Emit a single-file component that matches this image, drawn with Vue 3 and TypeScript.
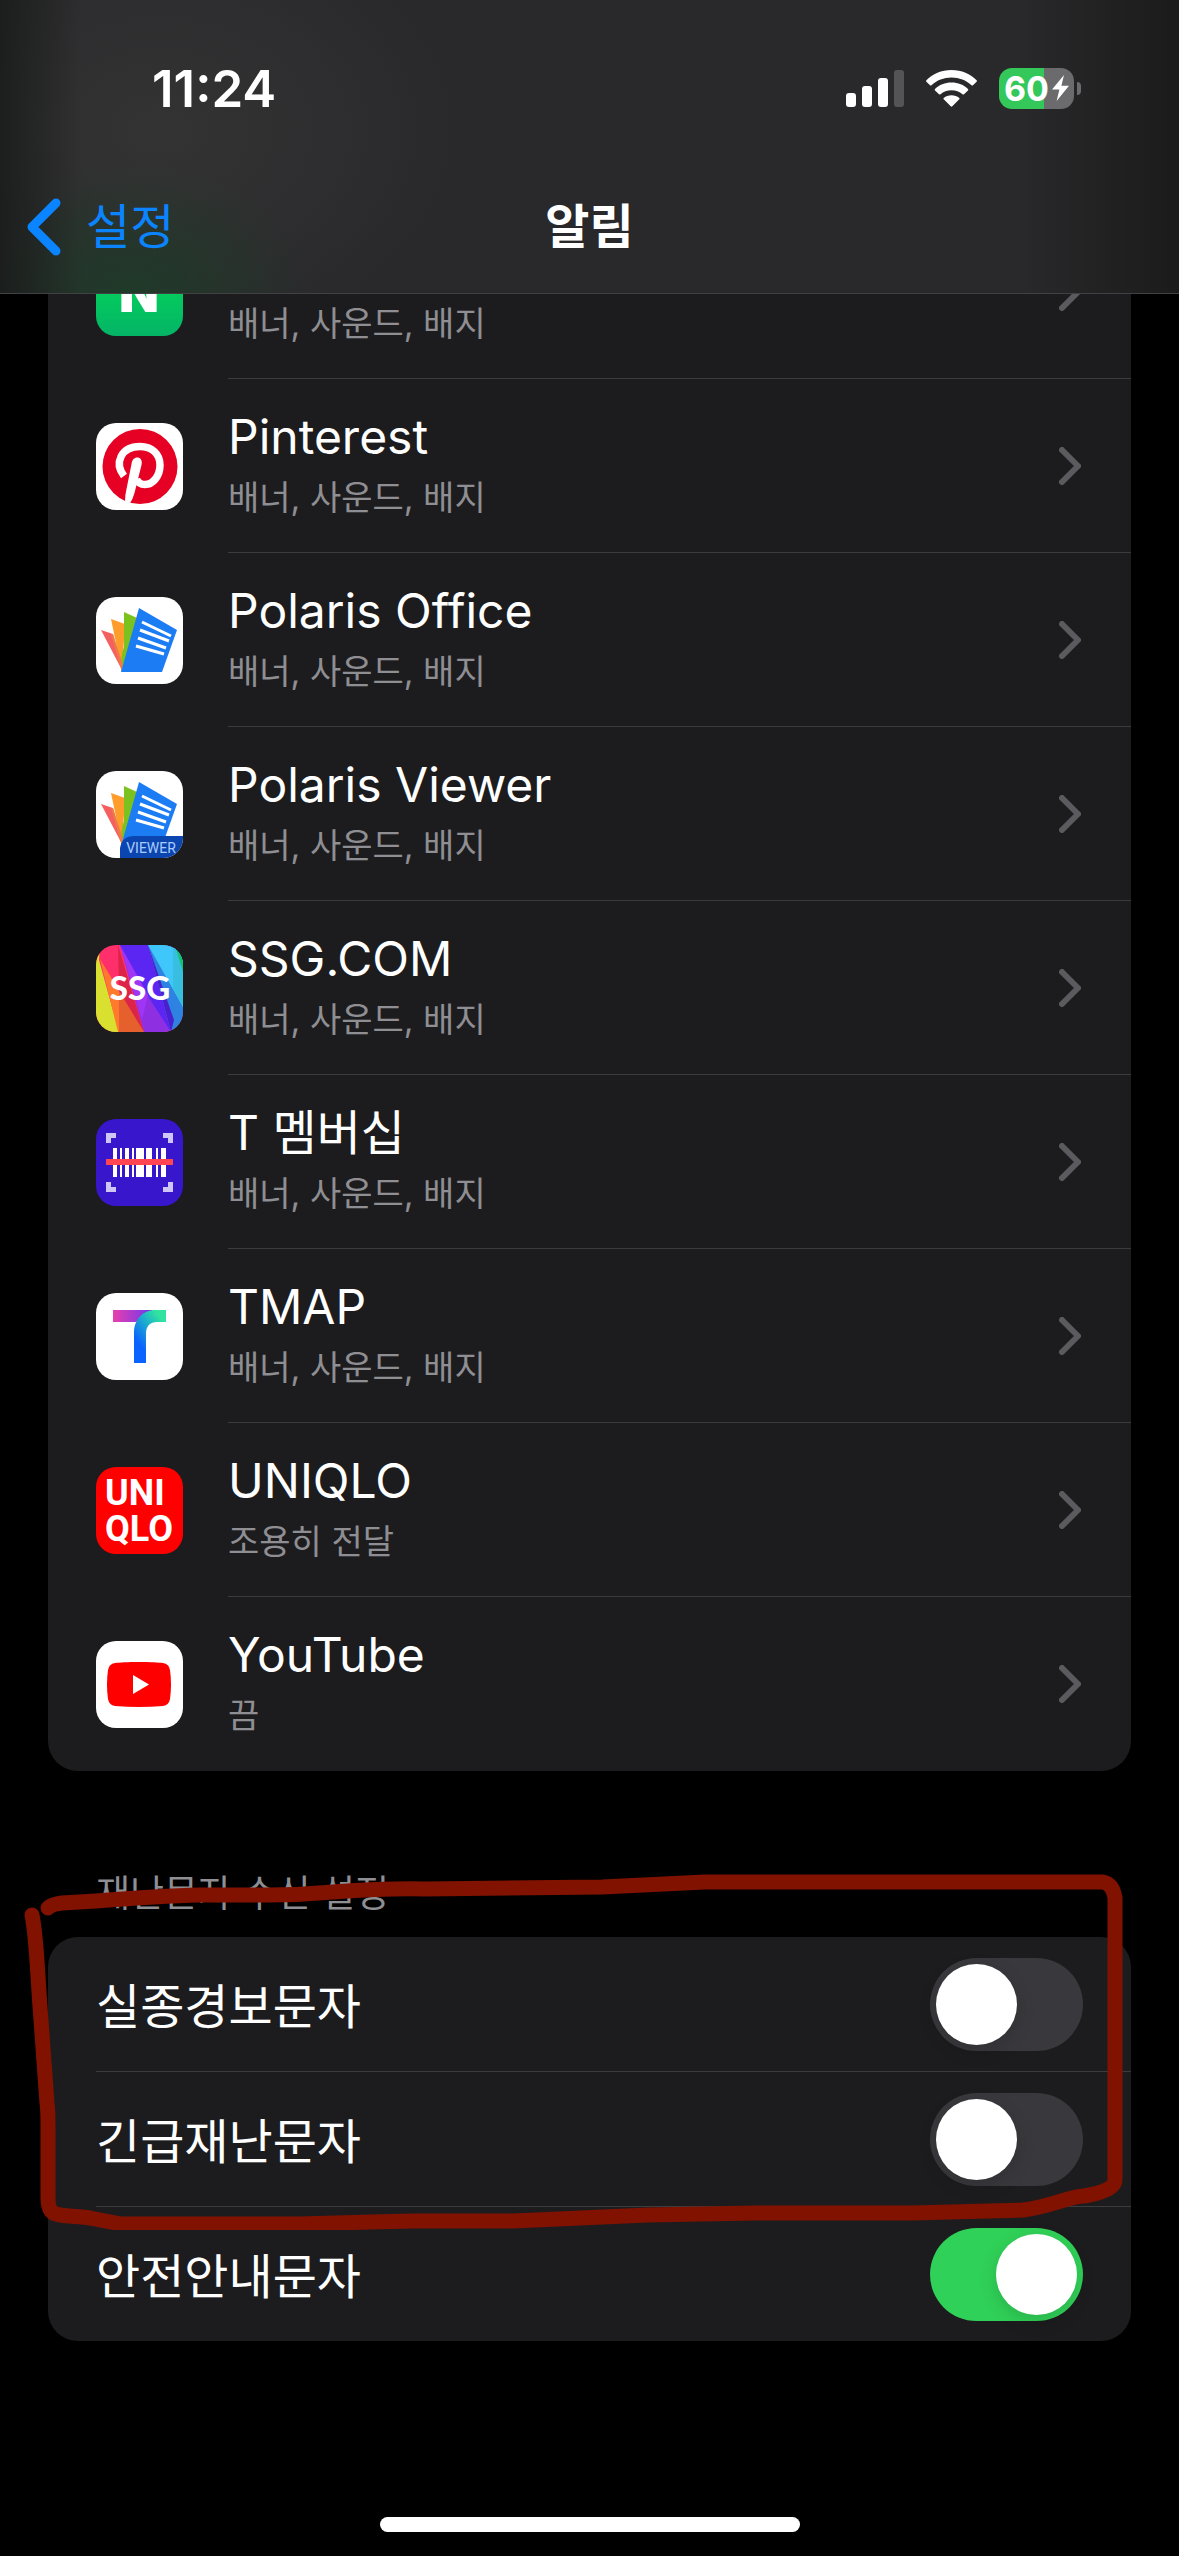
<script setup lang="ts">
import { ref } from 'vue'

interface AppEntry {
  id: string
  name: string
  detail: string
}

interface AlertSetting {
  id: string
  label: string
  on: boolean
}

const allAlerts = '배너, 사운드, 배지'

const apps: AppEntry[] = [
  { id: 'naver', name: '', detail: allAlerts },
  { id: 'pinterest', name: 'Pinterest', detail: allAlerts },
  { id: 'polaris-office', name: 'Polaris Office', detail: allAlerts },
  { id: 'polaris-viewer', name: 'Polaris Viewer', detail: allAlerts },
  { id: 'ssg', name: 'SSG.COM', detail: allAlerts },
  { id: 'tmembership', name: 'T 멤버십', detail: allAlerts },
  { id: 'tmap', name: 'TMAP', detail: allAlerts },
  { id: 'uniqlo', name: 'UNIQLO', detail: '조용히 전달' },
  { id: 'youtube', name: 'YouTube', detail: '끔' },
]

const alerts = ref<AlertSetting[]>([
  { id: 'missing', label: '실종경보문자', on: false },
  { id: 'emergency', label: '긴급재난문자', on: false },
  { id: 'safety', label: '안전안내문자', on: true },
])
</script>

<template>
  <div class="screen">
    <header class="top">
      <div class="status">
        <span class="time">11:24</span>
        <div class="indicators">
          <svg class="signal" viewBox="0 0 58 37" aria-hidden="true">
            <rect x="0" y="23" width="10" height="14" rx="3" fill="#fff" />
            <rect x="16" y="16" width="10" height="21" rx="3" fill="#fff" />
            <rect x="32" y="8" width="10" height="29" rx="3" fill="#fff" />
            <rect x="48" y="0" width="10" height="37" rx="3" fill="#545456" />
          </svg>
          <svg class="wifi" viewBox="0 0 51 37" aria-hidden="true">
            <g fill="#fff">
              <path d="M25.500 0C35.500 0 44.500 3.900 50.600 10.200Q51.300 11 50.600 11.700L47 15.200Q46.300 15.800 45.500 15.200C40.200 10.300 33.200 7.500 25.500 7.500S10.800 10.300 5.500 15.200Q4.700 15.800 4 15.200L.4 11.700Q-.3 11 .4 10.200C6.500 3.900 15.500 0 25.500 0Z" />
              <path d="M25.500 12.500C32 12.500 37.800 14.900 42 18.900Q42.700 19.700 42 20.400L38 24.300Q37.300 24.900 36.500 24.300C33.600 21.700 29.700 20.200 25.500 20.200S17.400 21.700 14.500 24.300Q13.700 24.900 13 24.300L9 20.400Q8.300 19.700 9 18.900C13.200 14.900 19 12.500 25.500 12.500Z" />
              <path d="M25.500 25.200C28.500 25.200 31.200 26.200 33.300 27.900Q34 28.600 33.300 29.300L26.300 36.300Q25.500 37 24.700 36.300L17.700 29.300Q17 28.600 17.700 27.900C19.800 26.200 22.500 25.200 25.500 25.200Z" />
            </g>
          </svg>
          <div class="battery">
            <div class="cell">
              <span>60</span>
              <svg viewBox="0 0 17 26" aria-hidden="true">
                <path d="M12 0L0 14.500H7.400L4.600 26L17 10.800H9.400Z" fill="#fff" />
              </svg>
            </div>
            <i class="cap"></i>
          </div>
        </div>
      </div>
      <nav class="nav">
        <button class="back" type="button">
          <svg viewBox="0 0 34 58" aria-hidden="true">
            <path d="M29 5L5 29L29 53" fill="none" stroke="#0a84ff" stroke-width="9" stroke-linecap="round" stroke-linejoin="round" />
          </svg>
          <span>설정</span>
        </button>
        <h1>알림</h1>
      </nav>
    </header>

    <main>
      <ul class="card apps">
        <li v-for="app in apps" :key="app.id">
          <a href="#" class="app">
            <svg class="icon" viewBox="0 0 87 87" aria-hidden="true">
              <template v-if="app.id === 'naver'">
                <defs>
                  <linearGradient id="naver-bg" x1="0" y1="0" x2="0" y2="1">
                    <stop offset="0.4" stop-color="#04d05c" />
                    <stop offset="1" stop-color="#04b466" />
                  </linearGradient>
                </defs>
                <rect width="87" height="87" fill="url(#naver-bg)" />
                <text x="43" y="63" text-anchor="middle" font-family="Inter, sans-serif" font-weight="900" font-size="52" fill="#fff">N</text>
              </template>

              <template v-else-if="app.id === 'pinterest'">
                <rect width="87" height="87" fill="#fff" />
                <circle cx="44" cy="43.500" r="37.500" fill="#e60023" />
                <path d="M28 53C18 40 25 23.500 44 23.500C56 23.500 64 31 64 42C64 53 57 61.500 49 61.500C45 61.500 42 60 40.500 56" fill="none" stroke="#fff" stroke-width="7.500" />
                <path d="M35.500 41C36 36 39 34 42 34.500C45 35 46.500 38 45.500 42L38.500 70Q37 76 33 82L29 78Q29 72 30.500 66Z" fill="#fff" />
              </template>

              <template v-else-if="app.id === 'polaris-office' || app.id === 'polaris-viewer'">
                <rect width="87" height="87" fill="#fff" />
                <path d="M5 33L17 37L27 75Z" fill="#f4605f" />
                <path d="M15 22L29 27L26 75Z" fill="#ff9d2c" />
                <path d="M28 15L41 21L26 75Q24 60 28 50Z" fill="#7cc21f" />
                <path d="M15 37L17 37L27 68L26 75Z" fill="#ef7a45" />
                <path d="M43 11L81 33L66 75H25Z" fill="#1c7cf4" />
                <path d="M46 25L75 39M44 33L73 44M42 41L70 51M40 49L68 57" stroke="#fff" stroke-width="3" />
                <template v-if="app.id === 'polaris-viewer'">
                  <path d="M24 87V77Q26 65 38 65H87V87Z" fill="#0b46b0" />
                  <text x="55" y="82" text-anchor="middle" font-family="Roboto, sans-serif" font-size="14" fill="#a9cdff">VIEWER</text>
                </template>
              </template>

              <template v-else-if="app.id === 'ssg'">
                <rect width="87" height="87" fill="#ff2f6c" />
                <path d="M0 0H4L3 15L23 87H0Z" fill="#d9e02f" />
                <path d="M4 14L22 87H48Z" fill="#ff7a2c" />
                <path d="M23 46L48 87H23Z" fill="#e5602c" />
                <path d="M22 0L48 87L23 46Z" fill="#dc2448" />
                <path d="M24 0H52L75 87H48Z" fill="#8f2fe2" />
                <path d="M24 0H52L75 87L50 48Z" fill="#5b26f2" />
                <path d="M24 0L52 50L46 75Z" fill="#a035f5" />
                <path d="M52 0H87V87H75Z" fill="#2d82e2" />
                <path d="M52 0H87V62Z" fill="#3fc6fb" />
                <path d="M77 0H87V62L77 44Z" fill="#38bfe0" />
                <path d="M52 0L75 87L78 75Z" fill="#4a1fd0" />
                <path d="M79 0H87V27Z" fill="#0cc46a" />
                <text x="44" y="55" text-anchor="middle" font-family="Lato, sans-serif" font-weight="900" font-size="33" fill="#fff">SSG</text>
              </template>

              <template v-else-if="app.id === 'tmembership'">
                <rect width="87" height="87" fill="#3716cc" />
                <path d="M10 24V14H20V19H15V24ZM67 14H77V24H72V19H67ZM10 63H15V68H20V73H10ZM72 63H77V73H67V68H72Z" fill="#cdc6f6" />
                <path d="M17 29h4v29h-4zM24 29h2v29h-2zM29 29h4v29h-4zM36 29h2v29h-2zM40 29h8v29h-8zM50 29h6v29h-6zM60 29h2v29h-2zM65 29h5v29h-5z" fill="#fff" />
                <rect x="10" y="40" width="67" height="6" fill="#ff4552" />
              </template>

              <template v-else-if="app.id === 'tmap'">
                <defs>
                  <linearGradient id="tmap-bar" x1="0" y1="0" x2="1" y2="0">
                    <stop offset="0" stop-color="#e83fae" />
                    <stop offset="1" stop-color="#6a38f0" />
                  </linearGradient>
                  <linearGradient id="tmap-stem" x1="0.800" y1="0" x2="0.200" y2="0.800">
                    <stop offset="0.100" stop-color="#30e3a0" />
                    <stop offset="0.400" stop-color="#1fb4c8" />
                    <stop offset="0.900" stop-color="#0a62ff" />
                  </linearGradient>
                </defs>
                <rect width="87" height="87" fill="#fff" />
                <path d="M17 17H57L40 29H17Z" fill="url(#tmap-bar)" />
                <path d="M70 17H60C46 17 38 27 38 40V70H50V41C50 33 54 29 61 29H70Z" fill="url(#tmap-stem)" />
              </template>

              <template v-else-if="app.id === 'uniqlo'">
                <rect width="87" height="87" fill="#f00" />
                <g font-family="Roboto, sans-serif" font-weight="700" font-size="36" fill="#fff">
                  <text x="9" y="38">UNI</text>
                  <text x="9" y="74">QLO</text>
                </g>
              </template>

              <template v-else>
                <rect width="87" height="87" fill="#fff" />
                <path d="M43 21C54 21 63 21.500 67 22Q73 23 74 29Q76 43.500 74 58Q73 64 67 65Q43 67 19 65Q13 64 12 58Q10 43.500 12 29Q13 23 19 22C23 21.500 32 21 43 21Z" fill="#f00" />
                <path d="M37 34L53 43.500L37 53Z" fill="#fff" />
              </template>
            </svg>
            <span class="body">
              <span class="text">
                <span class="name">{{ app.name }}</span>
                <span class="detail">{{ app.detail }}</span>
              </span>
              <svg class="chevron" viewBox="0 0 22 38" aria-hidden="true">
                <path d="M3 3L19 19L3 35" fill="none" stroke="#5a5a5f" stroke-width="6" stroke-linecap="round" stroke-linejoin="round" />
              </svg>
            </span>
          </a>
        </li>
      </ul>

      <section class="disaster">
        <h2>재난문자 수신 설정</h2>
        <ul class="card">
          <li v-for="alert in alerts" :key="alert.id" class="alert">
            <label :for="alert.id">{{ alert.label }}</label>
            <input :id="alert.id" v-model="alert.on" type="checkbox" role="switch" class="switch" />
          </li>
        </ul>
        <!-- Hand-drawn marker around the first two switches -->
        <svg class="marker" viewBox="0 0 1179 380" preserveAspectRatio="none" aria-hidden="true">
          <g fill="none" stroke="#811200" stroke-width="15" stroke-linecap="round" stroke-linejoin="round">
            <path d="M32 65C37 90 37 120 41 170L47 253Q48 260 48 275V348Q48 362 56 364C66 367 78 366 90 368L121 374H299L371 372L413 371H513L648 365L755 363H912L1023 360C1050 357 1070 346 1084 346Q1115 341 1115 330V48Q1113 34 1103 32H705L602 37L425 39Q390 38 333 42Q300 45 268 45H200Q160 46 96 51L62 53Q52 54 48 58" />
          </g>
        </svg>
      </section>
    </main>

    <footer class="home"><i></i></footer>
  </div>
</template>

<style>
body {
  background: #000;
}
</style>

<style scoped>
.screen {
  display: flex;
  flex-direction: column;
  min-height: 100vh;
  background: #000;
  color: #fff;
  font-family: Inter, 'Noto Sans CJK KR', sans-serif;
  font-size: 48px;
}

h1,
h2,
ul {
  margin: 0;
  padding: 0;
  list-style: none;
}

svg {
  display: block;
  flex: none;
}

.top {
  position: sticky;
  top: 0;
  z-index: 2;
  padding-top: 16px;
  border-bottom: 1px solid #414143;
  background:
    linear-gradient(90deg, rgba(24, 26, 25, 0.8), transparent 80px),
    radial-gradient(ellipse 180px 130px at 130px 293px, rgba(28, 62, 40, 0.8), transparent),
    radial-gradient(ellipse 300px 220px at 160px 130px, rgba(60, 58, 58, 0.6), transparent),
    linear-gradient(90deg, #29292b calc(100% - 160px), #1b1b1b);
}

.status {
  display: flex;
  align-items: center;
  justify-content: space-between;
  height: 144px;
  padding: 0 98px 0 152px;
}

.time {
  font-size: 51px;
  font-weight: 600;
}

.indicators {
  display: flex;
  align-items: center;
  gap: 22px;
}

.signal {
  width: 58px;
  height: 37px;
}

.wifi {
  width: 51px;
  height: 37px;
}

.battery {
  display: flex;
  align-items: center;
  gap: 3px;
}

.cell {
  display: flex;
  align-items: center;
  justify-content: center;
  gap: 3px;
  width: 75px;
  height: 41px;
  border-radius: 13px;
  background: linear-gradient(90deg, #34c759 60%, #6b6b6d 60%);
  font-size: 34px;
  font-weight: 700;
  line-height: 41px;
}

.cell svg {
  width: 17px;
  height: 26px;
}

.cap {
  width: 4px;
  height: 13px;
  border-radius: 0 6px 6px 0;
  background: #6b6b6d;
}

.nav {
  display: grid;
  grid-template-columns: 1fr auto 1fr;
  align-items: center;
  height: 133px;
  padding: 0 27px;
}

.back {
  display: flex;
  align-items: center;
  justify-self: start;
  gap: 25px;
  padding: 0;
  border: 0;
  background: none;
  color: #0a84ff;
  font: inherit;
  line-height: 60px;
}

.back svg {
  width: 34px;
  height: 58px;
}

h1 {
  font-size: 48px;
  font-weight: 600;
  line-height: 60px;
}

.card {
  margin: 0 48px;
  overflow: hidden;
  border-radius: 30px;
  background: #1c1c1e;
}

/* The list is scrolled so that its first row sits partly under the header */
.apps {
  margin-top: -89px;
}

.app {
  display: flex;
  gap: 45px;
  align-items: center;
  padding-left: 48px;
  color: inherit;
  text-decoration: none;
}

.icon {
  width: 87px;
  height: 87px;
  border-radius: 20px;
}

.body {
  display: flex;
  flex: 1;
  align-items: center;
  justify-content: space-between;
  height: 173px;
  padding-right: 50px;
  border-bottom: 1px solid #3c3c3f;
}

li:last-child .body {
  border-bottom-color: transparent;
}

.text {
  display: flex;
  flex-direction: column;
  gap: 6px;
}

.name {
  min-height: 60px;
  line-height: 60px;
}

.detail {
  padding-bottom: 2px;
  color: #8e8e93;
  font-size: 34px;
  line-height: 50px;
}

.chevron {
  width: 22px;
  height: 38px;
}

.disaster {
  position: relative;
  padding-top: 98px;
}

h2 {
  padding: 0 96px 18px;
  color: #8e8e93;
  font-size: 37px;
  font-weight: 400;
  line-height: 50px;
}

.alert {
  display: flex;
  align-items: center;
  justify-content: space-between;
  height: 134px;
  margin-left: 48px;
  padding-right: 48px;
  border-bottom: 1px solid #3c3c3f;
}

.alert label {
  padding-bottom: 2px;
}

.alert:last-child {
  border-bottom: 0;
}

.switch {
  appearance: none;
  display: flex;
  width: 153px;
  height: 93px;
  margin: 0;
  padding: 6px;
  box-sizing: border-box;
  border-radius: 47px;
  background: #39393d;
}

.switch::before {
  content: '';
  width: 81px;
  height: 81px;
  border-radius: 50%;
  background: #fff;
  box-shadow: 0 6px 18px rgba(0, 0, 0, 0.15);
}

.switch:checked {
  justify-content: flex-end;
  background: #30d158;
}

.marker {
  position: absolute;
  top: 79px;
  left: 0;
  width: 100%;
  height: 380px;
  pointer-events: none;
}

.home {
  display: flex;
  justify-content: center;
  margin-top: auto;
  padding-bottom: 24px;
}

.home i {
  width: 420px;
  height: 15px;
  border-radius: 8px;
  background: #fff;
}
</style>
